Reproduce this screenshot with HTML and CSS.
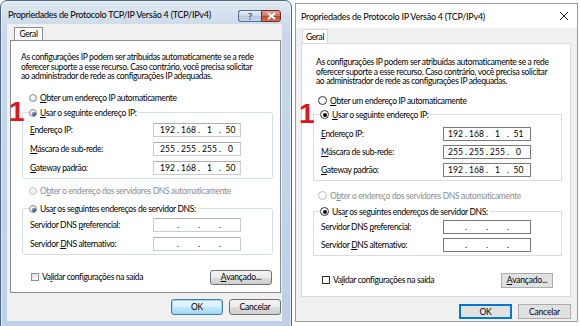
FILE: index.html
```html
<!DOCTYPE html>
<html lang="pt-BR">
<head>
  <meta charset="UTF-8" />
  <title>Propriedades de Protocolo TCP/IPv4</title>
  <link rel="stylesheet" href="styles.css">
</head>
<body>
  <div class="screen">

    <!-- Windows 7 -->
    <div class="win win7">
      <div class="titlebar">
        <span class="title">Propriedades de Protocolo TCP/IP Versão 4 (TCP/IPv4)</span>
        <div class="caption">
          <span class="cap-btn help">?</span>
          <span class="cap-btn close">
            <svg width="9" height="8" viewBox="0 0 9 8"><path d="M1 1 L8 7 M8 1 L1 7" stroke="#fff" stroke-width="2" /></svg>
          </span>
        </div>
      </div>
      <div class="client">
        <div class="tabs"><span class="tab">Geral</span></div>
        <div class="panel">
          <span class="step">1</span>
          <p class="intro">As configurações IP podem ser atribuídas automaticamente se a rede<br>oferecer suporte a esse recurso. Caso contrário, você precisa solicitar<br>ao administrador de rede as configurações IP adequadas.</p>
          <div class="opt first"><span class="radio"></span><span><u>O</u>bter um endereço IP automaticamente</span></div>
          <fieldset class="group">
            <legend class="opt"><span class="radio on"></span><span><u>U</u>sar o seguinte endereço IP:</span></legend>
            <div class="row"><span><u>E</u>ndereço IP:</span><span class="ip"><i>192</i><b>.</b><i>168</i><b>.</b><i>1</i><b>.</b><i>50</i></span></div>
            <div class="row"><span><u>M</u>áscara de sub-rede:</span><span class="ip"><i>255</i><b>.</b><i>255</i><b>.</b><i>255</i><b>.</b><i>0</i></span></div>
            <div class="row"><span><u>G</u>ateway padrão:</span><span class="ip"><i>192</i><b>.</b><i>168</i><b>.</b><i>1</i><b>.</b><i>50</i></span></div>
          </fieldset>
          <div class="opt off"><span class="radio"></span><span>O<u>b</u>ter o endereço dos servidores DNS automaticamente</span></div>
          <fieldset class="group dns">
            <legend class="opt"><span class="radio on"></span><span>Usa<u>r</u> os seguintes endereços de servidor DNS:</span></legend>
            <div class="row"><span>Servidor DNS <u>p</u>referencial:</span><span class="ip"><i></i><b>.</b><i></i><b>.</b><i></i><b>.</b><i></i></span></div>
            <div class="row"><span>Servidor <u>D</u>NS alternativo:</span><span class="ip"><i></i><b>.</b><i></i><b>.</b><i></i><b>.</b><i></i></span></div>
          </fieldset>
          <div class="bottom-row">
            <label class="check"><span class="box"></span><span>Va<u>l</u>idar configurações na saída</span></label>
            <button class="btn adv"><u>A</u>vançado...</button>
          </div>
        </div>
        <div class="actions">
          <button class="btn default">OK</button>
          <button class="btn">Cancelar</button>
        </div>
      </div>
    </div>

    <!-- Windows 10 -->
    <div class="win win10">
      <div class="titlebar">
        <span class="title">Propriedades de Protocolo IP Versão 4 (TCP/IPv4)</span>
        <span class="x-close">
          <svg width="10" height="10" viewBox="0 0 10 10"><path d="M1 1 L9 9 M9 1 L1 9" stroke="#222" stroke-width="1" /></svg>
        </span>
      </div>
      <div class="client">
        <div class="tabs"><span class="tab">Geral</span></div>
        <div class="panel">
          <span class="step">1</span>
          <p class="intro">As configurações IP podem ser atribuídas automaticamente se a rede<br>oferecer suporte a esse recurso. Caso contrário, você precisa solicitar<br>ao administrador de rede as configurações IP adequadas.</p>
          <div class="opt first"><span class="radio"></span><span><u>O</u>bter um endereço IP automaticamente</span></div>
          <fieldset class="group">
            <legend class="opt"><span class="radio on"></span><span><u>U</u>sar o seguinte endereço IP:</span></legend>
            <div class="row"><span><u>E</u>ndereço IP:</span><span class="ip"><i>192</i><b>.</b><i>168</i><b>.</b><i>1</i><b>.</b><i>51</i></span></div>
            <div class="row"><span><u>M</u>áscara de sub-rede:</span><span class="ip"><i>255</i><b>.</b><i>255</i><b>.</b><i>255</i><b>.</b><i>0</i></span></div>
            <div class="row"><span><u>G</u>ateway padrão:</span><span class="ip"><i>192</i><b>.</b><i>168</i><b>.</b><i>1</i><b>.</b><i>50</i></span></div>
          </fieldset>
          <div class="opt off"><span class="radio"></span><span>O<u>b</u>ter o endereço dos servidores DNS automaticamente</span></div>
          <fieldset class="group dns">
            <legend class="opt"><span class="radio on"></span><span>Usa<u>r</u> os seguintes endereços de servidor DNS:</span></legend>
            <div class="row"><span>Servidor DNS <u>p</u>referencial:</span><span class="ip"><i></i><b>.</b><i></i><b>.</b><i></i><b>.</b><i></i></span></div>
            <div class="row"><span>Servidor <u>D</u>NS alternativo:</span><span class="ip"><i></i><b>.</b><i></i><b>.</b><i></i><b>.</b><i></i></span></div>
          </fieldset>
          <div class="bottom-row">
            <label class="check"><span class="box"></span><span>Va<u>l</u>idar configurações na saída</span></label>
            <button class="btn adv"><u>A</u>vançado...</button>
          </div>
        </div>
        <div class="actions">
          <button class="btn default">OK</button>
          <button class="btn">Cancelar</button>
        </div>
      </div>
    </div>

  </div>
</body>
</html>
```

FILE: styles.css
```css
* {
  box-sizing: border-box;
}
body {
  margin: 0;
  background: #fff;
  font-family: Lato, "Open Sans", sans-serif;
  font-size: 8.5px;
  letter-spacing: -0.35px;
  color: #000;
}
.screen {
  display: flex;
  align-items: flex-start;
  gap: 3px;
  width: 580px;
  height: 326px;
  overflow: hidden;
}
u {
  text-decoration-thickness: 1px;
  text-underline-offset: 1px;
}

/* shared window parts */
.win {
  display: flex;
  flex-direction: column;
  flex-shrink: 0;
}
.titlebar {
  display: flex;
  align-items: center;
  flex-shrink: 0;
}
.title {
  flex: 1;
  font-size: 9px;
  letter-spacing: -0.25px;
  white-space: nowrap;
}
.client {
  background: #f0f0f0;
  display: flex;
  flex-direction: column;
}
.tabs {
  display: flex;
  position: relative;
  z-index: 1;
}
.tab {
  background: #fff;
  border: 1px solid #898c95;
  border-bottom: none;
  display: flex;
  align-items: center;
  justify-content: center;
  margin-bottom: -1px;
}
.panel {
  position: relative;
  background: #fff;
  border: 1px solid #898c95;
  padding: 12px 8px 0 10px;
}
.intro {
  margin: 0;
  line-height: 9.5px;
  white-space: nowrap;
}
.step {
  position: absolute;
  font-family: "Liberation Sans", Arial, sans-serif;
  font-weight: bold;
  font-size: 28px;
  letter-spacing: 0;
  line-height: 1;
  color: #e3121b;
}
.opt {
  display: flex;
  align-items: center;
  gap: 3px;
  height: 10px;
  white-space: nowrap;
}
.opt.off {
  color: #8d8d8d;
}
.radio {
  display: inline-block;
  width: 8px;
  height: 8px;
  border-radius: 50%;
  position: relative;
  flex-shrink: 0;
}
.radio.on::after {
  content: "";
  position: absolute;
  left: 2px;
  top: 2px;
  width: 4px;
  height: 4px;
  border-radius: 50%;
}
.group {
  margin: 0;
  padding: 5px 31px 3px 7px;
  border-radius: 3px;
  min-width: 0;
}
.group legend {
  padding: 0 2px 0 0;
  margin-left: -1px;
}
.row {
  display: flex;
  align-items: center;
  justify-content: space-between;
  height: 14px;
  white-space: nowrap;
}
.row + .row {
  margin-top: 5px;
}
.ip {
  display: flex;
  align-items: center;
  width: 88px;
  height: 14px;
  padding-left: 5px;
  background: #fff;
  letter-spacing: 0;
}
.ip i {
  font-style: normal;
  width: 17px;
  text-align: center;
}
.ip b {
  font-weight: normal;
  width: 4px;
  text-align: center;
}
.bottom-row {
  display: flex;
  align-items: center;
  justify-content: space-between;
}
.check {
  display: flex;
  align-items: center;
  gap: 3px;
}
.box {
  display: inline-block;
  width: 8px;
  height: 8px;
}
.btn {
  font-family: inherit;
  font-size: 8.5px;
  letter-spacing: -0.2px;
  color: #000;
  padding: 0;
  display: flex;
  align-items: center;
  justify-content: center;
}
.actions {
  display: flex;
  justify-content: flex-end;
}

/* Windows 7 look */
.win7 {
  width: 292px;
  height: 330px;
  border: 1px solid #4d6685;
  border-radius: 7px 7px 0 0;
  background: linear-gradient(180deg, #dfe8f2 0, #c8d8ea 30px, #bdd0e5 100%);
  box-shadow: inset 0 0 0 1px rgba(255, 255, 255, 0.55);
  padding: 0 10px 0 6px;
}
.win7 .titlebar {
  height: 23px;
  padding: 3px 0 0 1px;
}
.win7 .caption {
  display: flex;
  align-self: flex-start;
  margin-top: 6px;
}
.win7 .cap-btn {
  height: 12px;
  display: flex;
  align-items: center;
  justify-content: center;
  border: 1px solid #5a6e88;
}
.win7 .help {
  width: 23px;
  border-radius: 3px 0 0 3px;
  border-right: none;
  color: #3b4e66;
  font-size: 9px;
  font-weight: bold;
  background: linear-gradient(#e9eff6, #c9d6e5 50%, #b6c7db 51%, #c8d7e8);
}
.win7 .close {
  width: 20px;
  border-radius: 0 3px 3px 0;
  background: linear-gradient(#e8a493, #d3705c 50%, #c2432b 51%, #d3765c);
  border-color: #6d2a22;
}
.win7 .client {
  width: 275px;
  height: 297px;
  padding: 0 1px 0 3px;
}
.win7 .tab {
  width: 29px;
  height: 13px;
  margin: 3px 0 0 4px;
}
.win7 .panel {
  height: 253px;
}
.win7 .step {
  left: -2px;
  top: 57px;
}
.win7 .opt.first {
  margin: 11px 0 0 8px;
}
.win7 .group {
  margin: 5px -1px 0 1px;
  border: 1px solid #d5dfe5;
}
.win7 .dns {
  margin-top: 8px;
  padding-top: 4px;
}
.win7 .opt.off {
  margin: 7px 0 0 8px;
}
.win7 .radio {
  border: 1px solid #8e8f8f;
  background: radial-gradient(circle at 40% 35%, #fff, #dcdcdc 80%);
}
.win7 .radio.on::after {
  background: radial-gradient(circle at 40% 35%, #7fa9d6, #1a3f7a 70%);
}
.win7 .opt.off .radio {
  border-color: #c5c5c5;
  background: #f4f4f4;
}
.win7 .ip {
  border: 1px solid #c9cdd3;
  border-top-color: #abadb3;
}
.win7 .bottom-row {
  margin: 15px 0 0 10px;
}
.win7 .box {
  border: 1px solid #8e8f8f;
  background: linear-gradient(135deg, #dcdcdc, #fff);
}
.win7 .btn {
  height: 15px;
  border: 1px solid #707070;
  border-radius: 3px;
  background: linear-gradient(#f2f2f2, #ebebeb 50%, #dddddd 51%, #cfcfcf);
}
.win7 .adv {
  width: 62px;
}
.win7 .actions {
  gap: 6px;
  margin-top: 6px;
}
.win7 .actions .btn {
  width: 52px;
  height: 16px;
}
.win7 .btn.default {
  border-color: #3c7fb1;
  background: linear-gradient(#eaf6fd, #d9f0fc 50%, #bee6fd 51%, #a7d9f5);
  box-shadow: inset 0 0 0 1px #9fd7f3;
}

/* Windows 10 look */
.win10 {
  width: 283px;
  height: 319px;
  margin-top: 3px;
  border: 1px solid #9a9a9a;
  background: #fff;
}
.win10 .titlebar {
  height: 24px;
  padding-left: 5px;
  background: #fff;
}
.win10 .x-close {
  width: 26px;
  display: flex;
  justify-content: center;
}
.win10 .client {
  flex: 1;
  padding: 0 6px 0 5px;
}
.win10 .tab {
  width: 26px;
  height: 14px;
  margin: 1px 0 0 1px;
  border-color: #d9d9d9;
}
.win10 .panel {
  height: 254px;
  border-color: #d9d9d9;
  padding: 14px 0 0 14px;
}
.win10 .step {
  left: -3px;
  top: 56px;
}
.win10 .opt.first {
  margin: 9px 0 0 2px;
}
.win10 .radio {
  width: 9px;
  height: 9px;
  border: 1px solid #333;
  background: #fff;
}
.win10 .radio.on::after {
  left: 1.5px;
  top: 1.5px;
  width: 4px;
  height: 4px;
  background: #000;
}
.win10 .opt.off .radio {
  border-color: #bcbcbc;
}
.win10 .group {
  margin: 4px 8px 0 -3px;
  padding: 7px 30px 3px 7px;
  border: 1px solid #dcdcdc;
  border-radius: 0;
}
.win10 .dns {
  margin-top: 6px;
  padding-top: 3px;
}
.win10 .row + .row {
  margin-top: 4px;
}
.win10 .opt.off {
  margin: 10px 0 0 2px;
}
.win10 .ip {
  border: 1px solid #7a7a7a;
  padding-left: 3px;
}
.win10 .bottom-row {
  margin: 17px 17px 0 6px;
}
.win10 .box {
  width: 8px;
  height: 8px;
  border: 1px solid #333;
  background: #fff;
}
.win10 .btn {
  height: 15px;
  border: 1px solid #adadad;
  background: #e1e1e1;
}
.win10 .adv {
  width: 52px;
}
.win10 .actions {
  gap: 6px;
  margin-top: 7px;
}
.win10 .actions .btn {
  width: 53px;
  height: 15px;
}
.win10 .btn.default {
  border: 1px solid #0078d7;
  box-shadow: inset 0 0 0 1px #0078d7;
}
```
